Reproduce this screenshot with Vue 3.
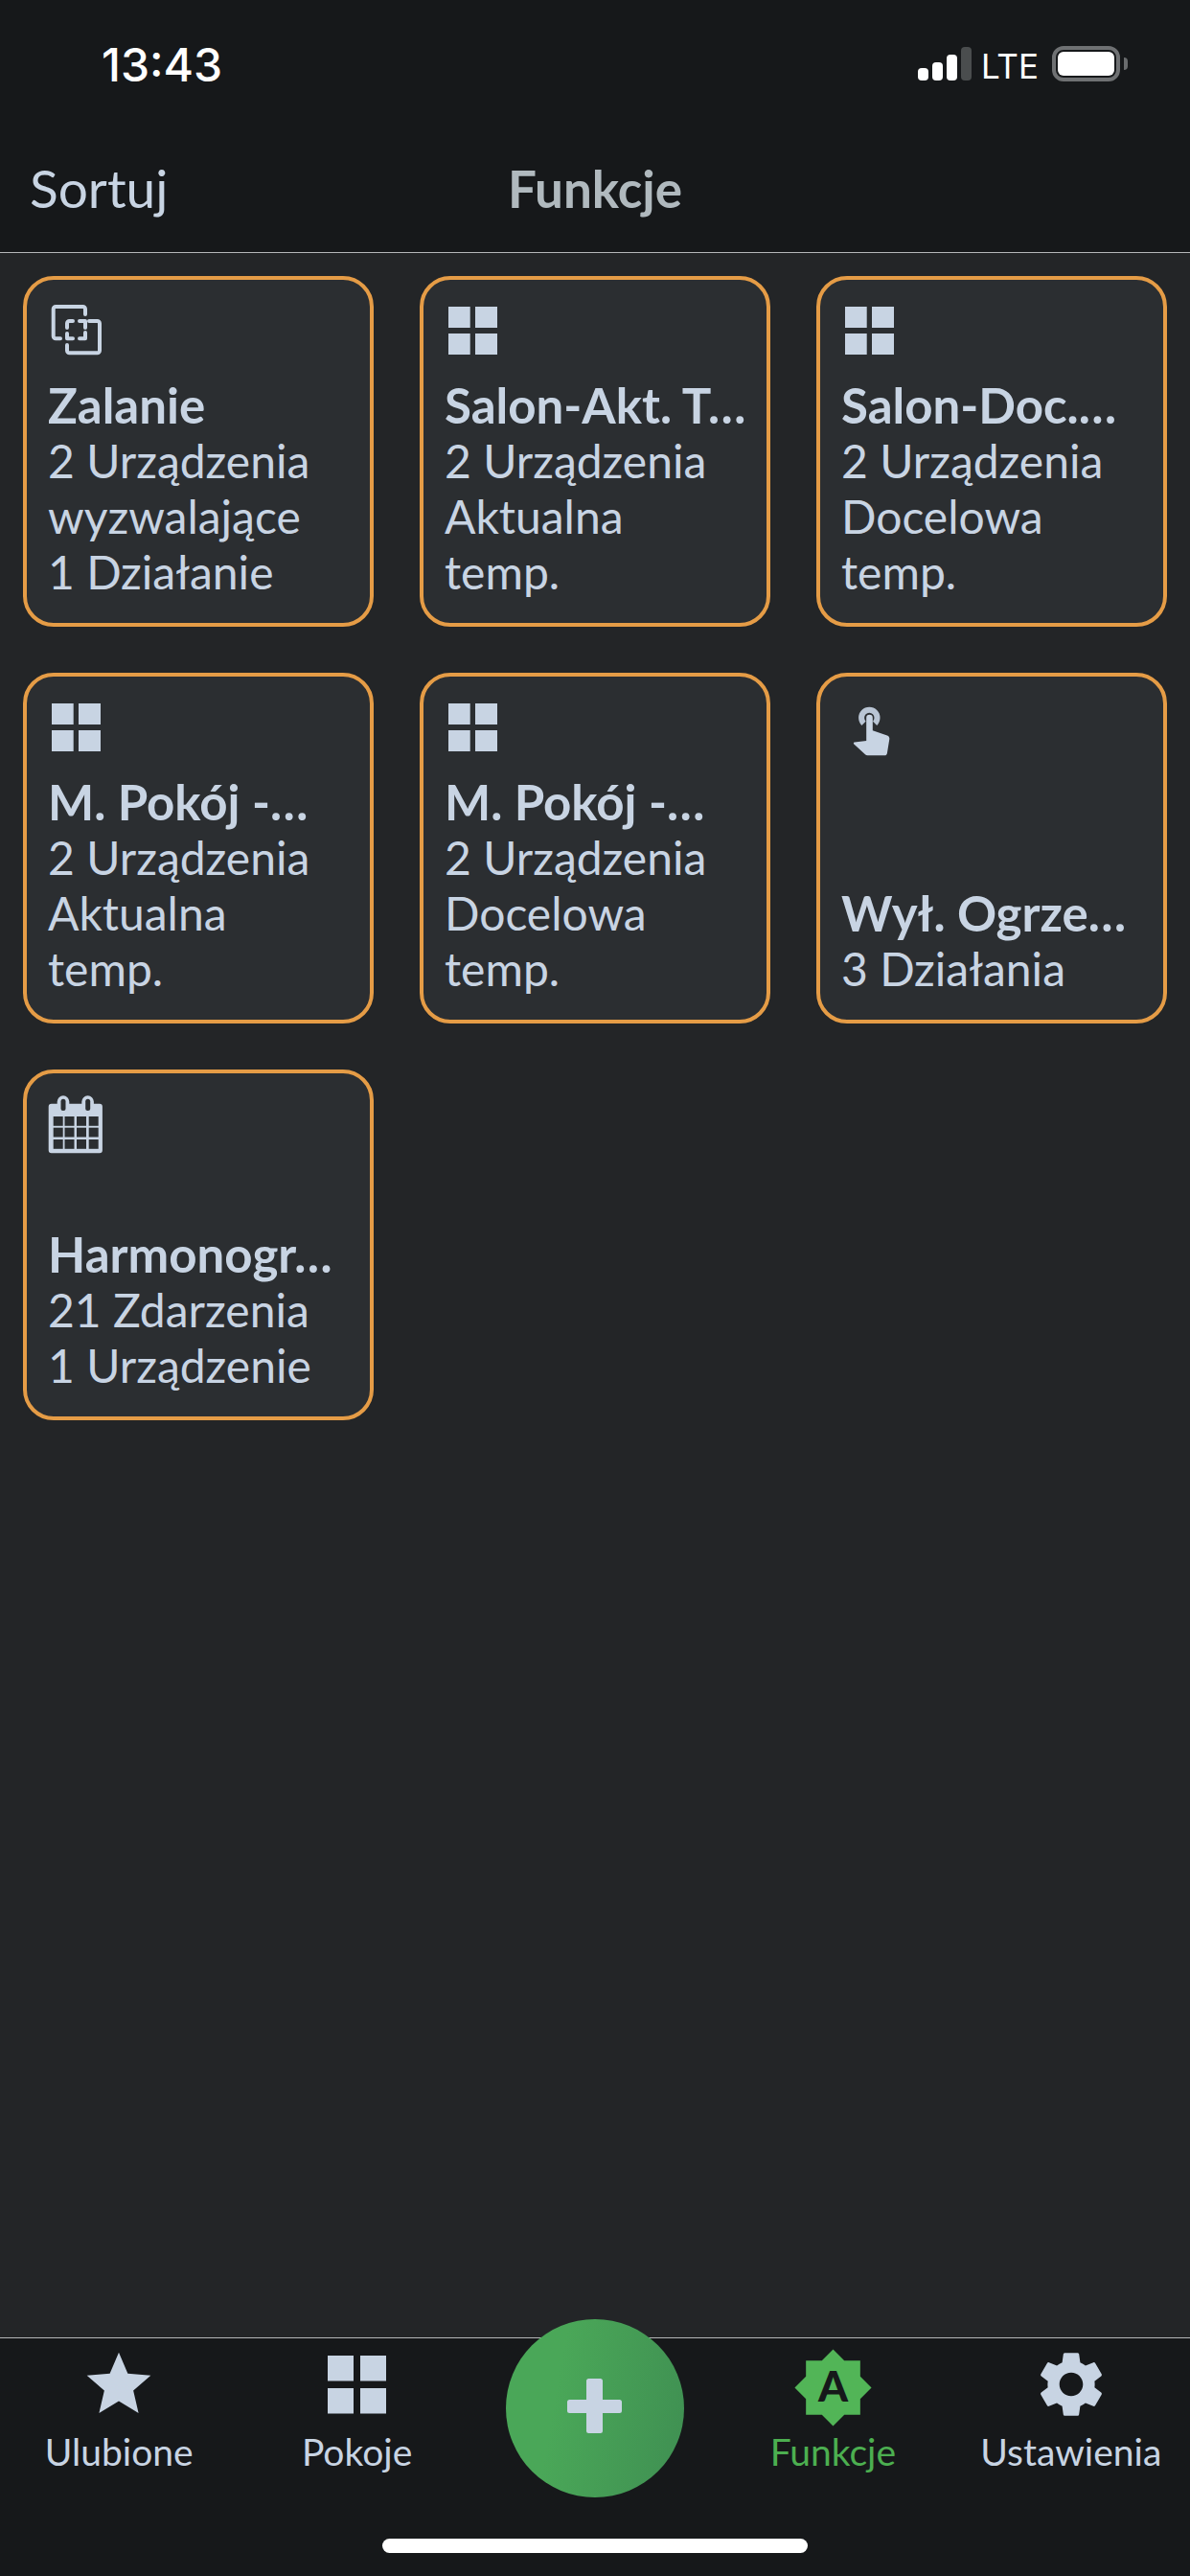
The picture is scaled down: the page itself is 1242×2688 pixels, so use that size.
<script setup>
const cards = [
  { icon: 'scene', title: 'Zalanie', lines: ['2 Urządzenia', 'wyzwalające', '1 Działanie'] },
  { icon: 'grid', title: 'Salon-Akt. T…', lines: ['2 Urządzenia', 'Aktualna', 'temp.'] },
  { icon: 'grid', title: 'Salon-Doc.…', lines: ['2 Urządzenia', 'Docelowa', 'temp.'] },
  { icon: 'grid', title: 'M. Pokój -…', lines: ['2 Urządzenia', 'Aktualna', 'temp.'] },
  { icon: 'grid', title: 'M. Pokój -…', lines: ['2 Urządzenia', 'Docelowa', 'temp.'] },
  { icon: 'touch', title: 'Wył. Ogrze…', lines: ['3 Działania'] },
  { icon: 'calendar', title: 'Harmonogr…', lines: ['21 Zdarzenia', '1 Urządzenie'] },
]

// calendar cells, 4 x 3
const calX = [15.7, 27.5, 40, 52.7]
const calY = [30, 41.7, 54]
</script>

<template>
  <div class="screen">
    <header class="top">
      <div class="status">
        <span class="time">13:43</span>
        <div class="status-right">
          <div class="signal">
            <i class="b1"></i><i class="b2"></i><i class="b3"></i><i class="b4"></i>
          </div>
          <span class="lte">LTE</span>
          <div class="battery"><div class="battery-fill"></div></div>
          <div class="battery-nub"></div>
        </div>
      </div>
      <div class="titlebar">
        <span class="sort">Sortuj</span>
        <span class="page-title">Funkcje</span>
        <span></span>
      </div>
    </header>

    <main class="grid">
      <div v-for="(card, i) in cards" :key="i" class="card">
        <svg class="card-icon" viewBox="0 0 80 75" width="80" height="75">
          <g v-if="card.icon === 'scene'" fill="none" stroke="#c8d4e3" stroke-width="4" stroke-linecap="round" stroke-linejoin="round">
            <path d="M49 23V17.500a2.500 2.500 0 0 0-2.500-2.500H18.200a2.500 2.500 0 0 0-2.500 2.500v28.300a2.500 2.500 0 0 0 2.500 2.500H23" />
            <path d="M53 30h8.500a2.500 2.500 0 0 1 2.500 2.500v28.300a2.500 2.500 0 0 1-2.500 2.500H32.500a2.500 2.500 0 0 1-2.500-2.500V55" />
            <path d="M30 37v-4.500a2.500 2.500 0 0 1 2.500-2.500H36" />
            <path d="M43 30h6v7" />
            <path d="M30 43v5.300h6" />
            <path d="M43 48.300h6V42" />
          </g>
          <g v-else-if="card.icon === 'grid'" fill="#c8d4e3">
            <rect x="14" y="15" width="22.700" height="22" />
            <rect x="42" y="15" width="23" height="22" />
            <rect x="14" y="43" width="22.700" height="22" />
            <rect x="42" y="43" width="23" height="22" />
          </g>
          <g v-else-if="card.icon === 'touch'" transform="translate(2 6)">
            <path d="M31.500 29.800a8.200 8.200 0 1 1 11.600 0" fill="none" stroke="#b9c5d4" stroke-width="6" />
            <path d="M34.200 48V24a3.300 3.300 0 0 1 6.600 0V37.300l15.200 5.200c1.700.7 2.500 2 2.300 3.700l-2.400 14.800c-.3 1.500-1.200 2.300-2.700 2.300H35.500c-1 0-1.800-.4-2.500-1.100L21.300 51.500c-.8-.9-.4-1.700.6-1.900z" fill="#c8d4e3" />
          </g>
          <g v-else-if="card.icon === 'calendar'" transform="translate(0 2)">
            <path d="M10.700 19.700a3 3 0 0 1 3-3h6V14.600a6.300 6.300 0 0 1 12.600 0v2.100h13V14.600a6.300 6.300 0 0 1 12.600 0v2.100h6a3 3 0 0 1 3 3v45.600a3 3 0 0 1-3 3H13.700a3 3 0 0 1-3-3z" fill="#c8d4e3" />
            <rect x="23.500" y="11.700" width="5" height="12.300" rx="2.500" fill="#2b2e31" />
            <rect x="49.200" y="11.700" width="5" height="12.300" rx="2.500" fill="#2b2e31" />
            <template v-for="x in calX" :key="x">
              <rect v-for="y in calY" :key="y" :x="x" :y="y" width="10" height="9.800" fill="#2b2e31" />
            </template>
          </g>
        </svg>
        <div class="card-text">
          <div class="card-title">{{ card.title }}</div>
          <div v-for="line in card.lines" :key="line" class="card-line">{{ line }}</div>
        </div>
      </div>
    </main>

    <footer class="tabbar">
      <nav class="tabs">
        <div class="tab">
          <div class="tab-icon">
            <svg viewBox="0 0 24 24" width="80" height="80"><path fill="#c8d4e3" d="M12 17.270L18.180 21l-1.640-7.030L22 9.240l-7.190-.610L12 2 9.190 8.630 2 9.240l5.460 4.730L5.820 21z" /></svg>
          </div>
          <span class="tab-label">Ulubione</span>
        </div>
        <div class="tab">
          <div class="tab-icon">
            <svg viewBox="0 0 61 61" width="61" height="61" fill="#c8d4e3">
              <rect x="0" y="0" width="27" height="26.500" />
              <rect x="34" y="0" width="27" height="26.500" />
              <rect x="0" y="34" width="27" height="26.500" />
              <rect x="34" y="34" width="27" height="26.500" />
            </svg>
          </div>
          <span class="tab-label">Pokoje</span>
        </div>
        <div class="tab">
          <button class="fab">
            <svg viewBox="0 0 57 57" width="57" height="57"><path fill="#c8d4e3" d="M20 2.500a2.500 2.500 0 0 1 2.500-2.500h12a2.500 2.500 0 0 1 2.500 2.500V22h17.500a2.500 2.500 0 0 1 2.500 2.500v9a2.500 2.500 0 0 1-2.500 2.500H37v18.500a2.500 2.500 0 0 1-2.500 2.500h-12a2.500 2.500 0 0 1-2.500-2.500V36H2.500A2.500 2.500 0 0 1 0 33.500v-9A2.500 2.500 0 0 1 2.500 22H20z" /></svg>
          </button>
        </div>
        <div class="tab active">
          <div class="tab-icon">
            <svg class="auto-icon" viewBox="0 0 24 24" width="85" height="85">
              <path fill="#52b557" d="M20 8.690V4h-4.690L12 .690 8.690 4H4v4.690L.690 12 4 15.310V20h4.690L12 23.310 15.310 20H20v-4.690L23.310 12 20 8.690z" />
              <text x="12" y="16.200" text-anchor="middle" class="auto-letter">A</text>
            </svg>
          </div>
          <span class="tab-label">Funkcje</span>
        </div>
        <div class="tab">
          <div class="tab-icon">
            <svg viewBox="0 0 24 24" width="82" height="82"><path fill="#c8d4e3" d="M19.140 12.940c.040-.300.060-.610.060-.940 0-.320-.020-.640-.070-.940l2.030-1.580c.180-.140.230-.410.120-.610l-1.920-3.320c-.120-.220-.370-.290-.590-.220l-2.390.960c-.500-.380-1.030-.700-1.620-.940l-.360-2.540c-.040-.240-.240-.410-.480-.410h-3.840c-.240 0-.430.170-.470.410l-.360 2.540c-.590.240-1.130.570-1.620.940l-2.390-.960c-.220-.080-.470 0-.590.220L2.740 8.870c-.120.210-.080.470.120.610l2.030 1.580c-.050.300-.090.630-.090.940s.020.640.07.940l-2.030 1.580c-.180.140-.230.410-.120.610l1.920 3.320c.120.220.370.290.590.220l2.390-.960c.500.380 1.030.700 1.620.940l.360 2.540c.050.240.240.410.480.410h3.840c.240 0 .440-.170.470-.410l.360-2.540c.590-.240 1.130-.560 1.620-.940l2.390.960c.220.080.47 0 .590-.220l1.920-3.320c.120-.220.070-.470-.120-.610l-2.010-1.580zM12 15.600c-1.980 0-3.600-1.620-3.600-3.600s1.620-3.600 3.600-3.600 3.600 1.620 3.600 3.600-1.620 3.600-3.600 3.600z" /></svg>
          </div>
          <span class="tab-label">Ustawienia</span>
        </div>
      </nav>
      <div class="home-indicator"></div>
    </footer>
  </div>
</template>

<style>
html, body { margin: 0; background: #232527; }
</style>

<style scoped>
.screen {
  width: 1242px;
  height: 2688px;
  display: flex;
  flex-direction: column;
  background: #232527;
  font-family: Lato, "Noto Sans", sans-serif;
  color: #c8d4e3;
  overflow: hidden;
}

/* top */
.top {
  height: 264px;
  box-sizing: border-box;
  background: #16181a;
  border-bottom: 1px solid #b4b6b8;
}
.status {
  height: 158px;
  box-sizing: border-box;
  padding: 40px 65px 0 106px;
  display: flex;
  justify-content: space-between;
  align-items: flex-start;
}
.time {
  font-family: Inter, sans-serif;
  font-weight: 500;
  font-size: 48px;
  line-height: 56px;
  color: #fff;
}
.status-right {
  display: flex;
  align-items: flex-start;
  margin-top: 9px;
}
.signal {
  display: flex;
  align-items: flex-end;
  gap: 4px;
  height: 35px;
}
.signal i {
  display: block;
  width: 11px;
  background: #fff;
  border-radius: 4px;
}
.signal .b1 { height: 13px; }
.signal .b2 { height: 19px; }
.signal .b3 { height: 27px; }
.signal .b4 { height: 35px; background: #4a4d4e; }
.lte {
  font-family: Inter, sans-serif;
  font-size: 35px;
  line-height: 36px;
  color: #fff;
  margin: 2px 0 0 10px;
}
.battery {
  width: 71px;
  height: 37px;
  box-sizing: border-box;
  margin: -1px 0 0 14px;
  padding: 2px;
  border: 4px solid #6f7173;
  border-radius: 12px;
}
.battery-fill {
  height: 100%;
  background: #fff;
  border-radius: 6px;
}
.battery-nub {
  width: 4px;
  height: 13px;
  margin: 11px 0 0 4px;
  background: #6a6c6e;
  border-radius: 0 4px 4px 0;
}
.titlebar {
  display: grid;
  grid-template-columns: 1fr auto 1fr;
  padding: 0 31px;
  height: 76px;
  align-items: center;
}
.sort {
  font-size: 55px;
  color: #c8d4e3;
}
.page-title {
  font-size: 53px;
  font-weight: 700;
  color: #b0b9be;
}

/* cards */
.grid {
  flex: 1;
  display: grid;
  grid-template-columns: repeat(3, 366px);
  grid-auto-rows: 366px;
  gap: 48px;
  padding: 24px;
  align-content: start;
}
.card {
  box-sizing: border-box;
  border: 4px solid #e59c46;
  border-radius: 32px;
  background: #2b2e31;
  display: flex;
  flex-direction: column;
  justify-content: space-between;
  padding: 0 0 24px 22px;
}
.card-icon {
  display: block;
  margin: 13px 0 0 -10px;
}
.card-text {
  white-space: nowrap;
  font-size: 48px;
  line-height: 58px;
}
.card-title {
  font-size: 51px;
  font-weight: 700;
}

/* tab bar */
.tabbar {
  height: 249px;
  box-sizing: border-box;
  background: #16181a;
  border-top: 1px solid #b4b6b8;
  display: flex;
  flex-direction: column;
  align-items: center;
}
.tabs {
  width: 100%;
  display: grid;
  grid-template-columns: repeat(5, 1fr);
  padding-top: 7px;
}
.tab {
  display: flex;
  flex-direction: column;
  align-items: center;
}
.tab-icon {
  height: 82px;
  display: flex;
  align-items: center;
  justify-content: center;
}
.tab-icon svg {
  display: block;
}
.auto-icon {
  margin-top: 6px;
}
.auto-letter {
  font-family: Lato, sans-serif;
  font-weight: 900;
  font-size: 12.500px;
  fill: #16181a;
}
.tab-label {
  font-size: 39px;
  line-height: 46px;
  margin-top: 6px;
}
.tab.active .tab-label {
  color: #4caf50;
}
.fab {
  width: 186px;
  height: 186px;
  margin-top: -27px;
  padding: 0 0 6px;
  border: 0;
  border-radius: 50%;
  background: linear-gradient(100deg, #4aa758 30%, #3f8f52 100%);
  display: flex;
  align-items: center;
  justify-content: center;
  position: relative;
}
.home-indicator {
  width: 444px;
  height: 15px;
  margin-top: 43px;
  background: #fff;
  border-radius: 8px;
}
</style>
